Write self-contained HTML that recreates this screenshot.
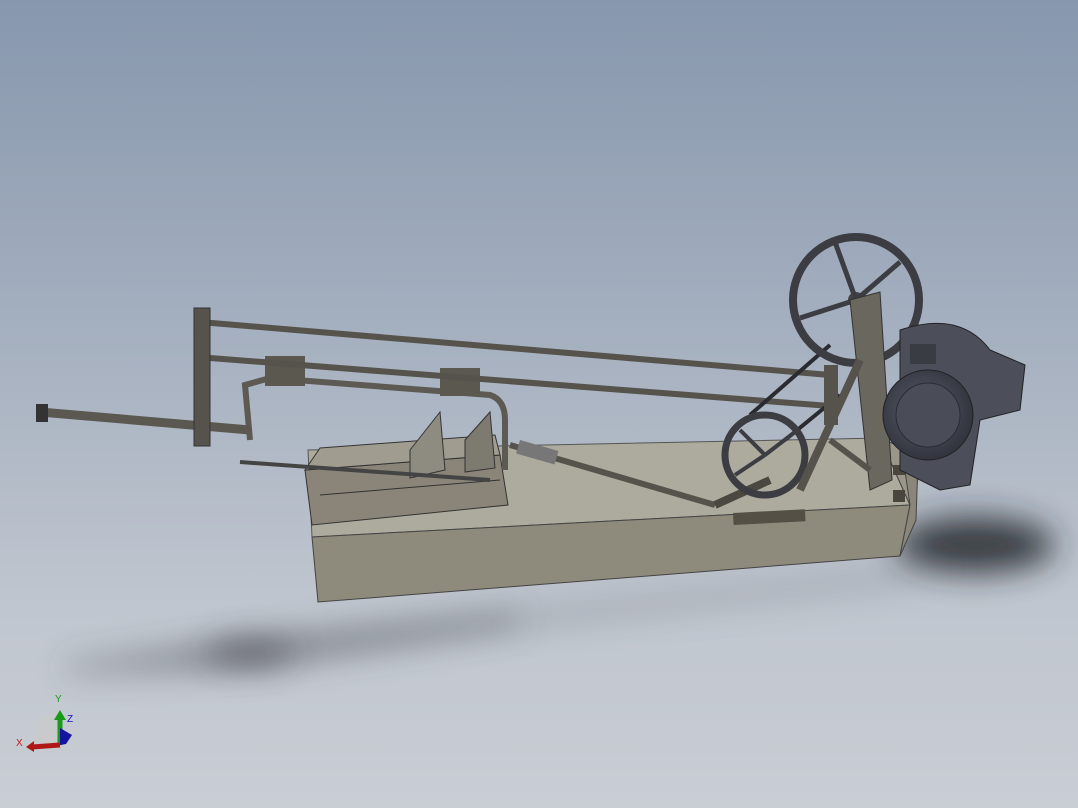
<!DOCTYPE html>
<html><head><style>
html,body{margin:0;padding:0}
body{width:1078px;height:808px;overflow:hidden;background:linear-gradient(180deg,#8797ad 0%,#a4afbf 40%,#c0c6cf 75%,#c9cdd4 100%);font-family:"Liberation Sans",sans-serif}
svg{position:absolute;left:0;top:0}
</style></head><body>
<svg width="1078" height="808" viewBox="0 0 1078 808">
<defs>
<filter id="b" filterUnits="userSpaceOnUse" x="0" y="0" width="1078" height="808"><feGaussianBlur stdDeviation="16"/></filter>
<radialGradient id="m" cx="0.45" cy="0.45" r="0.6"><stop offset="0" stop-color="#5a5e6a"/><stop offset="1" stop-color="#2e313a"/></radialGradient>
</defs>
<!-- shadows -->
<polygon points="60,665 240,640 520,610 520,628 250,668 70,672" fill="#3a3d44" opacity="0.5" filter="url(#b)"/>
<ellipse cx="250" cy="652" rx="45" ry="12" fill="#30333a" opacity="0.5" filter="url(#b)"/>
<ellipse cx="975" cy="545" rx="80" ry="28" fill="#24262c" opacity="0.85" filter="url(#b)"/>
<polygon points="520,610 900,570 950,560 900,585 520,628" fill="#6a6e76" opacity="0.35" filter="url(#b)"/>
<!-- base -->
<polygon points="308,450 880,438 910,505 312,537" fill="#adab9e" stroke="#555" stroke-width="1"/>
<polygon points="312,537 910,505 900,556 318,602" fill="#8e8a7c" stroke="#444" stroke-width="1"/>
<polygon points="880,438 920,455 915,505 910,505" fill="#9a968a" stroke="#444"/>
<polygon points="903,458 918,462 916,520 900,556 910,505" fill="#8a8679" stroke="#444"/>
<rect x="733" y="513" width="72" height="12" fill="#555046" transform="rotate(-3 733 513)"/>
<rect x="893" y="490" width="12" height="12" fill="#4a463e"/>
<rect x="893" y="465" width="12" height="10" fill="#4a463e"/>
<!-- vise -->
<polygon points="305,470 500,455 508,505 312,525" fill="#8a8578" stroke="#333"/>
<polygon points="320,448 495,435 500,455 305,470" fill="#a09d90" stroke="#333"/>
<polygon points="410,450 440,412 445,470 410,478" fill="#8e8b80" stroke="#333"/>
<polygon points="465,440 490,412 495,468 465,472" fill="#7d7a70" stroke="#333"/>
<line x1="320" y1="495" x2="500" y2="480" stroke="#333"/>
<line x1="240" y1="462" x2="490" y2="480" stroke="#444" stroke-width="4"/>
<!-- saw frame -->
<path d="M250 440 L245 385 L270 378 L490 395 Q505 400 505 420 L505 470" fill="none" stroke="#5c5a52" stroke-width="6"/>
<rect x="265" y="356" width="40" height="30" fill="#5a584f"/>
<rect x="440" y="368" width="40" height="28" fill="#5a584f"/>
<!-- long rods -->
<line x1="200" y1="322" x2="830" y2="375" stroke="#55534c" stroke-width="6"/>
<line x1="210" y1="358" x2="830" y2="406" stroke="#55534c" stroke-width="6"/>
<line x1="40" y1="412" x2="250" y2="430" stroke="#5a5850" stroke-width="9"/>
<rect x="194" y="308" width="16" height="138" fill="#55534b" stroke="#333"/>
<rect x="36" y="404" width="12" height="18" fill="#333"/>
<!-- connecting rod -->
<line x1="510" y1="445" x2="715" y2="505" stroke="#55534b" stroke-width="6"/>
<line x1="715" y1="505" x2="770" y2="480" stroke="#4a4840" stroke-width="8"/>
<rect x="520" y="440" width="40" height="14" fill="#777" transform="rotate(16 520 440)"/>
<!-- belt -->
<line x1="750" y1="415" x2="830" y2="345" stroke="#2a2b30" stroke-width="4"/>
<line x1="785" y1="440" x2="840" y2="395" stroke="#2a2b30" stroke-width="4"/>
<!-- large pulley -->
<circle cx="856" cy="300" r="63" fill="none" stroke="#3c3d42" stroke-width="8"/>
<circle cx="856" cy="300" r="8" fill="#444"/>
<line x1="856" y1="300" x2="835" y2="242" stroke="#3c3d42" stroke-width="5"/>
<line x1="856" y1="300" x2="900" y2="262" stroke="#3c3d42" stroke-width="5"/>
<line x1="856" y1="300" x2="800" y2="318" stroke="#3c3d42" stroke-width="5"/>
<!-- small pulley -->
<circle cx="765" cy="455" r="40" fill="none" stroke="#3c3d42" stroke-width="7"/>
<line x1="765" y1="455" x2="740" y2="430" stroke="#3c3d42" stroke-width="4"/>
<line x1="765" y1="455" x2="795" y2="432" stroke="#3c3d42" stroke-width="4"/>
<line x1="765" y1="455" x2="735" y2="475" stroke="#3c3d42" stroke-width="4"/>
<!-- frame posts -->
<polygon points="850,300 880,292 892,480 870,490" fill="#6a675e" stroke="#333"/>
<line x1="800" y1="490" x2="860" y2="360" stroke="#55534b" stroke-width="8"/>
<line x1="830" y1="440" x2="870" y2="470" stroke="#55534b" stroke-width="6"/>
<rect x="824" y="365" width="14" height="60" fill="#55534b"/>
<!-- motor -->
<path d="M900 330 Q960 310 990 350 L1025 365 L1020 410 L980 420 L970 485 L940 490 L900 470 Z" fill="#4c4f5a" stroke="#222"/>
<circle cx="928" cy="415" r="45" fill="url(#m)" stroke="#222"/>
<circle cx="928" cy="415" r="32" fill="#4a4d58" stroke="#2a2c33"/>
<rect x="910" y="344" width="26" height="20" fill="#3a3c44"/>
<!-- triad -->
<path d="M33 745 Q35 712 60 712 L60 745 Z" fill="#c8cacc"/>
<line x1="60" y1="745" x2="60" y2="718" stroke="#1a9a1a" stroke-width="5"/>
<polygon points="54,720 66,720 60,710" fill="#1a9a1a"/>
<line x1="60" y1="745" x2="32" y2="747" stroke="#b01818" stroke-width="5"/>
<polygon points="34,741 34,752 26,747" fill="#b01818"/>
<polygon points="60,745 60,728 72,735 66,744" fill="#1414a0"/>
<text x="55" y="702" font-size="10" fill="#1a9a1a">Y</text>
<text x="67" y="722" font-size="10" fill="#1414c0">Z</text>
<text x="16" y="746" font-size="10" fill="#d01818">X</text>
</svg>
</body></html>
